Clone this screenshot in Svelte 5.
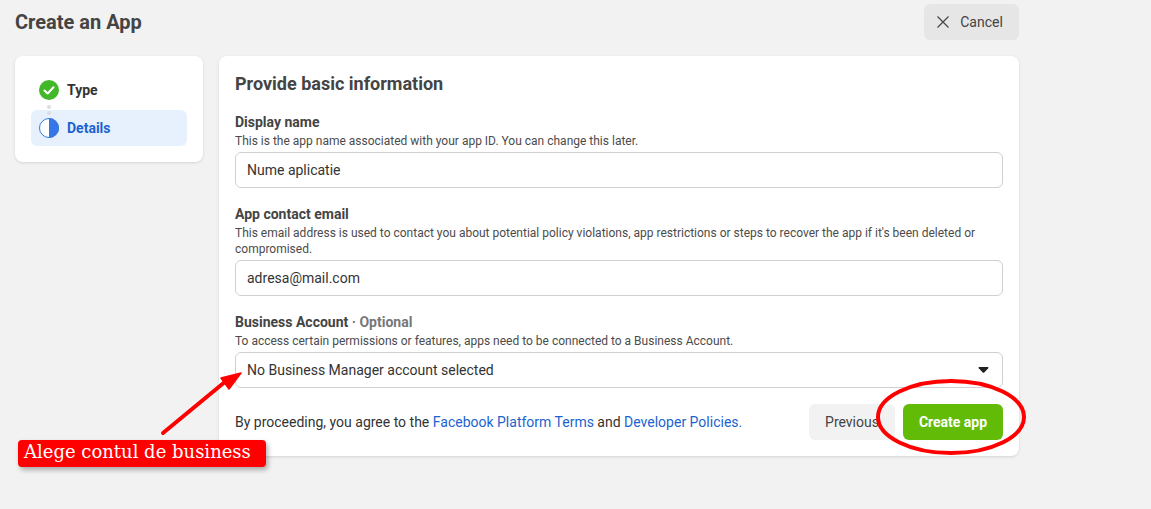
<script lang="ts">
	const terms = 'Facebook Platform Terms';
	const policies = 'Developer Policies.';
</script>

<div class="page">
	<header class="top">
		<h1>Create an App</h1>
		<button class="btn cancel">
			<svg width="16" height="16" viewBox="0 0 16 16"><path d="M2.5 2.5 L13.5 13.5 M13.5 2.5 L2.5 13.5" stroke="#444" stroke-width="1.2" fill="none" /></svg>
			<span>Cancel</span>
		</button>
	</header>

	<div class="cols">
		<aside class="card steps">
			<div class="step">
				<svg width="20" height="20" viewBox="0 0 20 20">
					<circle cx="10" cy="10" r="10" fill="#42b72a" />
					<path d="M5.5 10.5 L8.7 13.5 L14.5 7.3" stroke="#fff" stroke-width="2" fill="none" stroke-linecap="round" stroke-linejoin="round" />
				</svg>
				<span>Type</span>
			</div>
			<div class="dots"><i></i><i></i></div>
			<div class="step active">
				<svg width="20" height="20" viewBox="0 0 20 20">
					<circle cx="10" cy="10" r="9.5" fill="#fff" stroke="#3578e5" stroke-width="1" />
					<path d="M10 0 A10 10 0 0 1 10 20 Z" fill="#3578e5" />
				</svg>
				<span>Details</span>
			</div>
		</aside>

		<main class="card form">
			<h2>Provide basic information</h2>

			<div class="field">
				<div class="label">Display name</div>
				<div class="hint">This is the app name associated with your app ID. You can change this later.</div>
				<div class="input">Nume aplicatie</div>
			</div>

			<div class="field">
				<div class="label">App contact email</div>
				<div class="hint">This email address is used to contact you about potential policy violations, app restrictions or steps to recover the app if it's been deleted or compromised.</div>
				<div class="input">adresa@mail.com</div>
			</div>

			<div class="field">
				<div class="label">Business Account <span class="optional">· Optional</span></div>
				<div class="hint">To access certain permissions or features, apps need to be connected to a Business Account.</div>
				<div class="input select">
					<span>No Business Manager account selected</span>
					<svg width="11" height="6" viewBox="0 0 12 7"><path d="M1 0 H11 Q12.5 0 11.5 1.4 L7.2 6 Q6 7.2 4.8 6 L0.5 1.4 Q-0.5 0 1 0 Z" fill="#222" /></svg>
				</div>
			</div>

			<div class="foot">
				<p>By proceeding, you agree to the <a href="#terms">{terms}</a> and <a href="#policies">{policies}</a></p>
				<div class="actions">
					<button class="btn prev">Previous</button>
					<button class="btn create">Create app</button>
				</div>
			</div>
		</main>
	</div>

	<!-- annotations drawn over the page -->
	<svg class="marks" width="1151" height="509" viewBox="0 0 1151 509">
		<path d="M163 433 L226 381" stroke="#f00" stroke-width="4" stroke-linecap="round" fill="none" />
		<path d="M241 373 L229 389 L221 378 Z" fill="#f00" stroke="#f00" stroke-width="1.5" stroke-linejoin="round" />
		<ellipse cx="951" cy="417" rx="73" ry="36" fill="none" stroke="#f00" stroke-width="4" />
	</svg>
	<div class="callout">Alege contul de business</div>
</div>

<style>
	:global(body) {
		margin: 0;
		background: #f2f2f2;
	}

	.page {
		position: relative;
		width: 1151px;
		height: 509px;
		overflow: hidden;
		font-family: Roboto, 'Liberation Sans', sans-serif;
		color: #444;
	}

	.top {
		width: 1004px;
		margin-left: 15px;
		padding-top: 4px;
		display: flex;
		justify-content: space-between;
		align-items: center;
	}

	h1 {
		margin: 0;
		font-size: 20px;
		font-weight: 700;
		line-height: 36px;
		color: #444;
	}

	.btn {
		border: 0;
		border-radius: 6px;
		height: 36px;
		font-family: inherit;
		font-size: 14px;
		padding: 0;
	}

	.cancel {
		width: 95px;
		padding-right: 5px;
		background: #e6e6e6;
		color: #444;
		display: flex;
		align-items: center;
		justify-content: center;
		gap: 9px;
	}

	.cols {
		display: flex;
		align-items: flex-start;
		gap: 16px;
		width: 1004px;
		margin: 16px 0 0 15px;
	}

	.card {
		background: #fff;
		border-radius: 8px;
		box-shadow: 0 1px 3px rgba(0, 0, 0, 0.12);
	}

	.steps {
		box-sizing: border-box;
		width: 188px;
		height: 106px;
		padding: 16px;
	}

	.step {
		display: flex;
		align-items: center;
		gap: 8px;
		height: 36px;
		padding-left: 8px;
		border-radius: 6px;
		font-size: 14px;
		font-weight: 700;
		color: #333;
	}

	.step.active {
		margin-top: 2px;
		background: #e7f0fd;
		color: #1b63d0;
	}

	.dots {
		height: 0;
		position: relative;
	}

	.dots i {
		position: absolute;
		left: 16px;
		width: 4px;
		height: 4px;
		border-radius: 50%;
		background: #dadde1;
	}

	.dots i:first-child {
		top: -3px;
	}

	.dots i:last-child {
		top: 3px;
	}

	.form {
		box-sizing: border-box;
		flex: 1;
		height: 400px;
		padding: 16px;
	}

	h2 {
		margin: 0 0 17px;
		font-size: 18px;
		font-weight: 700;
		line-height: 24px;
		color: #444;
	}

	.field {
		margin-bottom: 17px;
	}

	.label {
		font-size: 14px;
		font-weight: 700;
		line-height: 18px;
		color: #444;
	}

	.optional {
		color: #777;
	}

	.hint {
		font-size: 12px;
		line-height: 16px;
		color: #4b4b4b;
		margin-top: 2px;
		margin-bottom: 3px;
	}

	.input {
		box-sizing: border-box;
		height: 36px;
		border: 1px solid #d0d0d0;
		border-radius: 6px;
		padding: 0 11px;
		display: flex;
		align-items: center;
		justify-content: space-between;
		font-size: 14px;
		color: #333;
	}

	.select svg {
		margin-right: 2px;
	}

	.foot {
		display: flex;
		justify-content: space-between;
		align-items: center;
		margin-top: -1px;
	}

	.foot p {
		margin: 0;
		font-size: 14px;
		color: #333;
	}

	a {
		color: #1b63d0;
		text-decoration: none;
	}

	.actions {
		display: flex;
		gap: 8px;
	}

	.prev {
		width: 86px;
		background: #f2f2f2;
		color: #444;
	}

	.create {
		width: 100px;
		background: #62bc07;
		color: #fff;
		font-weight: 700;
	}

	.marks {
		position: absolute;
		left: 0;
		top: 0;
		pointer-events: none;
	}

	.callout {
		position: absolute;
		left: 18px;
		top: 440px;
		box-sizing: border-box;
		width: 248px;
		height: 27px;
		padding-left: 6px;
		border-radius: 4px;
		background: #f00;
		color: #fff;
		font-family: 'DejaVu Serif', serif;
		font-size: 18px;
		line-height: 24px;
		box-shadow: 2px 3px 5px rgba(0, 0, 0, 0.3);
		white-space: nowrap;
	}
</style>
